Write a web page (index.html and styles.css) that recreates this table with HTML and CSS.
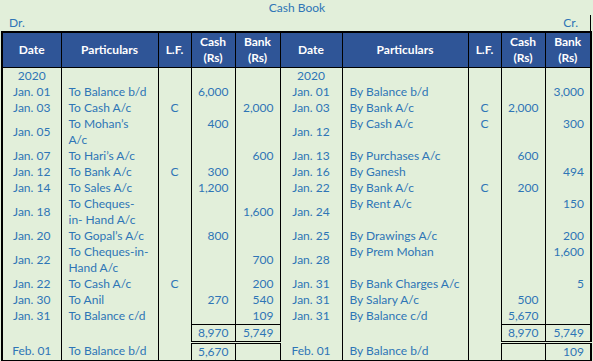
FILE: index.html
```html
<!DOCTYPE html>
<html>
<head>
<meta charset="utf-8">
<link rel="stylesheet" href="styles.css">
</head>
<body>
<div class="sheet">
  <div class="title">Cash Book</div>
  <div class="drcr"><span>Dr.</span><span>Cr.</span></div>
  <table class="book">
    <colgroup>
      <col class="w-d1"><col class="w-p1"><col class="w-lf"><col class="w-c"><col class="w-b1">
      <col class="w-d2"><col class="w-p2"><col class="w-lf"><col class="w-c"><col class="w-b2">
    </colgroup>
    <thead>
      <tr>
        <th>Date</th><th>Particulars</th><th>L.F.</th><th>Cash<br>(Rs)</th><th>Bank<br>(Rs)</th>
        <th>Date</th><th>Particulars</th><th>L.F.</th><th>Cash<br>(Rs)</th><th>Bank<br>(Rs)</th>
      </tr>
    </thead>
    <tbody>
      <tr>
        <td class="d">2020</td><td class="p"></td><td class="lf"></td><td class="n"></td><td class="n"></td>
        <td class="d">2020</td><td class="p"></td><td class="lf"></td><td class="n"></td><td class="n"></td>
      </tr>
      <tr>
        <td class="d">Jan. 01</td><td class="p">To Balance b/d</td><td class="lf"></td><td class="n">6,000</td><td class="n"></td>
        <td class="d">Jan. 01</td><td class="p">By Balance b/d</td><td class="lf"></td><td class="n"></td><td class="n">3,000</td>
      </tr>
      <tr>
        <td class="d">Jan. 03</td><td class="p">To Cash A/c</td><td class="lf">C</td><td class="n"></td><td class="n">2,000</td>
        <td class="d">Jan. 03</td><td class="p">By Bank A/c</td><td class="lf">C</td><td class="n">2,000</td><td class="n"></td>
      </tr>
      <tr class="tall">
        <td class="d">Jan. 05</td><td class="p t">To Mohan’s<br>A/c</td><td class="lf"></td><td class="n t">400</td><td class="n"></td>
        <td class="d">Jan. 12</td><td class="p t">By Cash A/c</td><td class="lf t">C</td><td class="n"></td><td class="n t">300</td>
      </tr>
      <tr>
        <td class="d">Jan. 07</td><td class="p">To Hari’s A/c</td><td class="lf"></td><td class="n"></td><td class="n">600</td>
        <td class="d">Jan. 13</td><td class="p">By Purchases A/c</td><td class="lf"></td><td class="n">600</td><td class="n"></td>
      </tr>
      <tr>
        <td class="d">Jan. 12</td><td class="p">To Bank A/c</td><td class="lf">C</td><td class="n">300</td><td class="n"></td>
        <td class="d">Jan. 16</td><td class="p">By Ganesh</td><td class="lf"></td><td class="n"></td><td class="n">494</td>
      </tr>
      <tr class="short">
        <td class="d">Jan. 14</td><td class="p">To Sales A/c</td><td class="lf"></td><td class="n">1,200</td><td class="n"></td>
        <td class="d">Jan. 22</td><td class="p">By Bank A/c</td><td class="lf">C</td><td class="n">200</td><td class="n"></td>
      </tr>
      <tr class="tall">
        <td class="d">Jan. 18</td><td class="p">To Cheques-<br>in- Hand A/c</td><td class="lf"></td><td class="n"></td><td class="n">1,600</td>
        <td class="d">Jan. 24</td><td class="p t">By Rent A/c</td><td class="lf"></td><td class="n"></td><td class="n t">150</td>
      </tr>
      <tr>
        <td class="d">Jan. 20</td><td class="p">To Gopal’s A/c</td><td class="lf"></td><td class="n">800</td><td class="n"></td>
        <td class="d">Jan. 25</td><td class="p">By Drawings A/c</td><td class="lf"></td><td class="n"></td><td class="n">200</td>
      </tr>
      <tr class="tall">
        <td class="d">Jan. 22</td><td class="p">To Cheques-in-<br>Hand A/c</td><td class="lf"></td><td class="n"></td><td class="n">700</td>
        <td class="d">Jan. 28</td><td class="p t">By Prem Mohan</td><td class="lf"></td><td class="n"></td><td class="n t">1,600</td>
      </tr>
      <tr>
        <td class="d">Jan. 22</td><td class="p">To Cash A/c</td><td class="lf">C</td><td class="n"></td><td class="n">200</td>
        <td class="d">Jan. 31</td><td class="p">By Bank Charges A/c</td><td class="lf"></td><td class="n"></td><td class="n">5</td>
      </tr>
      <tr>
        <td class="d">Jan. 30</td><td class="p">To Anil</td><td class="lf"></td><td class="n">270</td><td class="n">540</td>
        <td class="d">Jan. 31</td><td class="p">By Salary A/c</td><td class="lf"></td><td class="n">500</td><td class="n"></td>
      </tr>
      <tr>
        <td class="d">Jan. 31</td><td class="p">To Balance c/d</td><td class="lf"></td><td class="n"></td><td class="n">109</td>
        <td class="d">Jan. 31</td><td class="p">By Balance c/d</td><td class="lf"></td><td class="n">5,670</td><td class="n"></td>
      </tr>
      <tr class="total">
        <td class="d"></td><td class="p"></td><td class="lf"></td><td class="n sum">8,970</td><td class="n sum">5,749</td>
        <td class="d"></td><td class="p"></td><td class="lf"></td><td class="n sum">8,970</td><td class="n sum">5,749</td>
      </tr>
      <tr class="last">
        <td class="d">Feb. 01</td><td class="p">To Balance b/d</td><td class="lf"></td><td class="n">5,670</td><td class="n"></td>
        <td class="d">Feb. 01</td><td class="p">By Balance b/d</td><td class="lf"></td><td class="n"></td><td class="n">109</td>
      </tr>
    </tbody>
  </table>
</div>
</body>
</html>
```

FILE: styles.css
```css
html, body {
  margin: 0;
  padding: 0;
  background: #E2EFDA;
}

body {
  font-family: Lato, "Open Sans", sans-serif;
  font-size: 12px;
  color: #2E75B6;
}

.sheet {
  width: 590px;
  padding-left: 1px;
}

.title {
  height: 15px;
  line-height: 15px;
  text-align: center;
  padding-left: 2px;
}

.drcr {
  display: flex;
  justify-content: space-between;
  height: 16px;
  line-height: 16px;
  padding: 0 12px 0 8px;
  border-right: 1px solid #000;
}

.book {
  border-collapse: collapse;
  table-layout: fixed;
  width: 590px;
  border: 2px solid #000;
}

.w-d1 { width: 59px; }
.w-p1 { width: 97px; }
.w-lf { width: 33px; }
.w-c { width: 44px; }
.w-b1 { width: 45px; }
.w-d2 { width: 62px; }
.w-p2 { width: 126px; }
.w-b2 { width: 46px; }

.book th {
  background: #2F5597;
  color: #fff;
  font-weight: 700;
  height: 34px;
  line-height: 16px;
  padding: 0;
  border: 1px solid #000;
  text-align: center;
  vertical-align: middle;
}

.book td {
  height: 16px;
  line-height: 16px;
  padding: 0;
  white-space: nowrap;
  border-left: 1px solid #000;
  border-right: 1px solid #000;
  vertical-align: middle;
}

.book tr.tall td { height: 32px; }
.book tr.short td { height: 15px; }
.book tr.total td { height: 16px; }
.book tr.last td { height: 15px; }

.book td.d { text-align: center; }
.book td.p { text-align: left; padding-left: 7px; }
.book td.lf { text-align: center; }
.book td.n { text-align: right; padding-right: 6px; }
.book td.t { vertical-align: top; }

.book td.sum {
  border-top: 1px solid #000;
  border-bottom: 3px double #000;
}
```
